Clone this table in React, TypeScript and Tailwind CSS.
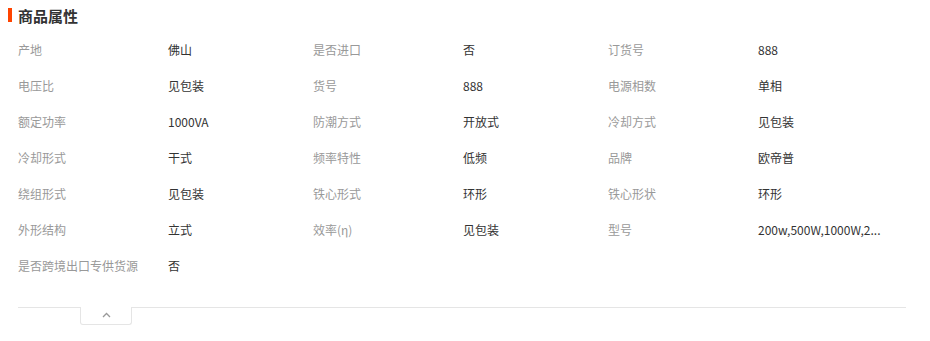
import React from "react";

const rows: [string, string][][] = [
  [["产地", "佛山"], ["是否进口", "否"], ["订货号", "888"]],
  [["电压比", "见包装"], ["货号", "888"], ["电源相数", "单相"]],
  [["额定功率", "1000VA"], ["防潮方式", "开放式"], ["冷却方式", "见包装"]],
  [["冷却形式", "干式"], ["频率特性", "低频"], ["品牌", "欧帝普"]],
  [["绕组形式", "见包装"], ["铁心形式", "环形"], ["铁心形状", "环形"]],
  [["外形结构", "立式"], ["效率(η)", "见包装"], ["型号", "200w,500W,1000W,2..."]],
  [["是否跨境出口专供货源", "否"]],
];

export default function App() {
  return (
    <div
      className="w-[930px] h-[341px] bg-white relative"
      style={{ fontFamily: '"Microsoft YaHei", "Noto Sans CJK SC", "Noto Sans", sans-serif' }}
    >
      <div className="flex items-center h-[30px] pl-[8px]">
        <div className="w-[4px] h-[14px] bg-[#ff4400]" />
        <div className="ml-[6px] text-[15px] font-bold text-[#333] leading-none">商品属性</div>
      </div>
      <div className="pl-[18px] pt-[2px]">
        {rows.map((r, i) => (
          <div key={i} className="flex h-[36px] items-center">
            {r.map(([k, v], j) => (
              <div key={j} className="flex w-[295px] text-[12px] leading-none">
                <div className="w-[150px] text-[#999] whitespace-nowrap">{k}</div>
                <div className="text-[#333] whitespace-nowrap">{v}</div>
              </div>
            ))}
          </div>
        ))}
      </div>
      <div className="ml-[18px] mt-[23px] w-[888px] border-t border-[#e5e5e5] relative">
        <div className="absolute left-[62px] top-[-1px] w-[52px] h-[18px] bg-white border border-t-0 border-[#e5e5e5] rounded-b-[3px] flex items-center justify-center">
          <svg width="9" height="6" viewBox="0 0 9 6" className="mt-[-2px]">
            <polyline points="1,5 4.5,1.5 8,5" fill="none" stroke="#999" strokeWidth="1.3" />
          </svg>
        </div>
      </div>
    </div>
  );
}
